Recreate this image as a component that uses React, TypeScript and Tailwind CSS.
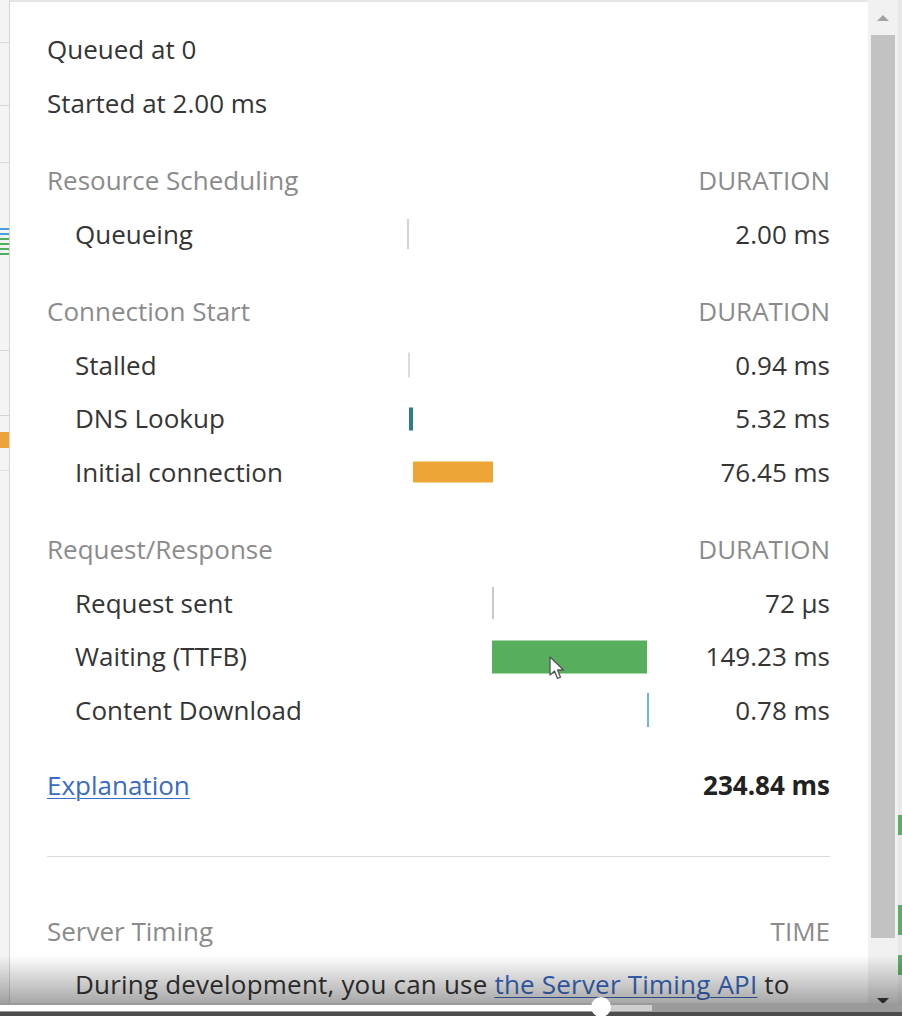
import React from "react"

type Row = {
  label: string
  value: string
  bar?: { left: number; width: number; height: number; color: string }
}

type Section = { title: string; right: string; rows: Row[] }

// bar offsets are relative to the timeline column, which starts at x=400
const sections: Section[] = [
  {
    title: "Resource Scheduling",
    right: "DURATION",
    rows: [{ label: "Queueing", value: "2.00 ms", bar: { left: 7, width: 2, height: 30, color: "#d2d2d2" } }],
  },
  {
    title: "Connection Start",
    right: "DURATION",
    rows: [
      { label: "Stalled", value: "0.94 ms", bar: { left: 8, width: 2, height: 25, color: "#dcdcdc" } },
      { label: "DNS Lookup", value: "5.32 ms", bar: { left: 9, width: 4, height: 23, color: "#2a7f88" } },
      { label: "Initial connection", value: "76.45 ms", bar: { left: 13, width: 80, height: 21, color: "#eea535" } },
    ],
  },
  {
    title: "Request/Response",
    right: "DURATION",
    rows: [
      { label: "Request sent", value: "72 µs", bar: { left: 92, width: 2, height: 32, color: "#c6c9cb" } },
      { label: "Waiting (TTFB)", value: "149.23 ms", bar: { left: 92, width: 155, height: 33, color: "#57ae5c" } },
      { label: "Content Download", value: "0.78 ms", bar: { left: 247, width: 2, height: 34, color: "#72b2ea" } },
    ],
  },
]

const font = { fontFamily: '"Open Sans", "Noto Sans", sans-serif' }

function LeftStrip() {
  return (
    <div className="relative w-[10px] shrink-0 bg-[#f4f4f4] border-r border-[#d6d6d6] overflow-hidden">
      <div className="absolute left-0 top-[42px] h-px w-full bg-[#d9d9d9]" />
      <div className="absolute left-0 top-[105px] h-px w-full bg-[#d9d9d9]" />
      <div className="absolute left-0 top-[162px] h-px w-full bg-[#d9d9d9]" />
      <div className="absolute left-0 top-[228px] flex w-full flex-col gap-[3px]">
        <div className="h-[2px] bg-[#4a9be0]" />
        <div className="h-[2px] bg-[#4a9be0]" />
        <div className="h-[2px] bg-[#52ad5a]" />
        <div className="h-[2px] bg-[#52ad5a]" />
        <div className="h-[2px] bg-[#52ad5a]" />
        <div className="h-[2px] bg-[#52ad5a]" />
      </div>
      <div className="absolute left-0 top-[350px] h-px w-full bg-[#d4d4d4]" />
      <div className="absolute left-0 top-[415px] h-px w-full bg-[#d4d4d4]" />
      <div className="absolute left-0 top-[432px] h-[16px] w-full bg-[#eda33a]" />
      <div className="absolute left-0 top-[470px] h-px w-full bg-[#e0e0e0]" />
    </div>
  )
}

function Scrollbar() {
  return (
    <div className="relative flex w-[30px] shrink-0 flex-col items-center bg-[#f1f1f1]">
      <div className="flex h-[35px] w-full items-center justify-center">
        <div className="h-0 w-0 border-x-[6px] border-b-[6px] border-x-transparent border-b-[#a3a3a3]" />
      </div>
      <div className="h-[903px] w-[24px] bg-[#c2c2c2]" />
      <div className="flex flex-1 w-full items-end justify-center pb-[12px]">
        <div className="h-0 w-0 border-x-[6px] border-t-[6px] border-x-transparent border-t-[#3e3e3e]" />
      </div>
    </div>
  )
}

export default function App() {
  return (
    <div className="relative flex h-[1016px] w-[902px] overflow-hidden bg-[#ededed] text-[#353535]" style={font}>
      <LeftStrip />

      <div className="mt-[2px] flex-1 bg-white pl-[37px] pr-[38px] pt-[21px] text-[26px] shadow-[-2px_0_4px_rgba(0,0,0,0.12)]">
        <div className="flex h-[53.5px] items-center">Queued at 0</div>
        <div className="flex h-[53.5px] items-center">Started at 2.00 ms</div>

        {sections.map(section => (
          <div key={section.title} className="mt-[24px]">
            <div className="flex h-[53.5px] items-center justify-between text-[#8b8b8b]">
              <span>{section.title}</span>
              <span>{section.right}</span>
            </div>
            {section.rows.map(row => (
              <div key={row.label} className="flex h-[53.5px] items-center">
                <span className="w-[353px] shrink-0 pl-[28px]">{row.label}</span>
                <div className="relative h-full w-[260px] shrink-0">
                  {row.bar && (
                    <div
                      className="absolute top-1/2 -translate-y-1/2"
                      style={{
                        left: row.bar.left,
                        width: row.bar.width,
                        height: row.bar.height,
                        backgroundColor: row.bar.color,
                      }}
                    />
                  )}
                </div>
                <span className="flex-1 text-right">{row.value}</span>
              </div>
            ))}
          </div>
        ))}

        <div className="mt-[22px] flex h-[53.5px] items-center justify-between">
          <a className="text-[#3a6bc4] underline decoration-1 underline-offset-[3px]">Explanation</a>
          <span className="font-bold text-[#222]">234.84 ms</span>
        </div>

        <div className="mt-[43px] h-px bg-[#dadada]" />

        <div className="mt-[48px] flex h-[53.5px] items-center justify-between text-[#8b8b8b]">
          <span>Server Timing</span>
          <span>TIME</span>
        </div>
        <div className="flex h-[53.5px] items-center whitespace-nowrap pl-[28px] tracking-[0.2px]">
          During development, you can use&nbsp;
          <a className="text-[#3a6bc4] underline decoration-1 underline-offset-[3px]">the Server Timing API</a>
          &nbsp;to
        </div>
      </div>

      <Scrollbar />
      <div className="relative w-[4px] shrink-0 bg-[#e8e8e8]">
        <div className="absolute top-[815px] h-[20px] w-full bg-[#5aae62]" />
        <div className="absolute top-[905px] h-[30px] w-full bg-[#5aae62]" />
        <div className="absolute top-[955px] h-[20px] w-full bg-[#5aae62]" />
      </div>

      {/* mouse cursor over the TTFB bar */}
      <svg className="absolute left-[549px] top-[656px]" width="16" height="26" viewBox="0 0 16 26">
        <path
          d="M1 1 L1 19 L5.5 15 L8.5 22.5 L11.5 21.2 L8.6 14 L14.5 14 Z"
          fill="#ffffff"
          stroke="#555"
          strokeWidth="1.3"
          strokeLinejoin="round"
        />
      </svg>

      {/* video player fade and progress bar */}
      <div className="pointer-events-none absolute inset-x-0 top-[955px] h-[49px] bg-gradient-to-b from-transparent to-black/35" />
      <div className="absolute inset-x-0 bottom-0 flex h-[13px] flex-col">
        <div className="relative flex h-[9px] items-center bg-[#9a9a9a]">
          <div className="h-[6px] w-[600px] bg-white" />
          <div className="h-[6px] w-[52px] bg-[#cfcfcf]" />
          <div className="absolute left-[591px] top-[-6px] h-[20px] w-[20px] rounded-full bg-white" />
        </div>
        <div className="flex-1 bg-[#4d4d4d]" />
      </div>
    </div>
  )
}
